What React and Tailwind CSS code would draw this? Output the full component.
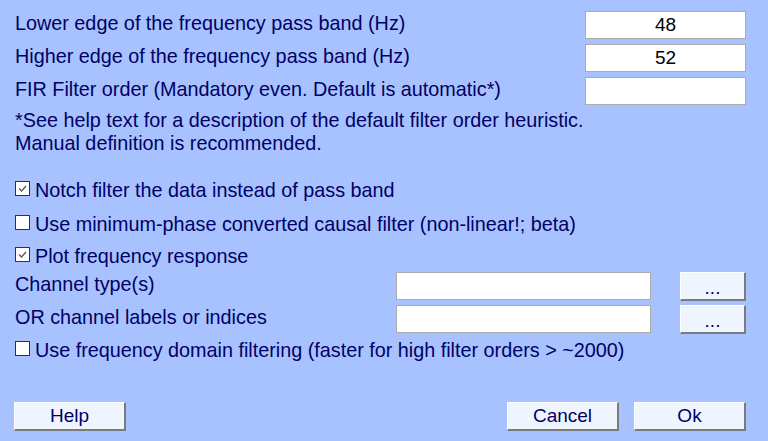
const Field = ({ value, className = "" }) => (
  <div
    className={`flex h-[28px] items-center justify-center border border-[#ababab] bg-white text-[19px] text-black ${className}`}
  >
    {value}
  </div>
);

const Btn = ({ children, className = "" }) => (
  <button
    className={`flex h-[29px] items-center justify-center border-t border-l border-r-2 border-b-2 border-t-white border-l-white border-r-[#7b7b7b] border-b-[#7b7b7b] bg-[#eef5ff] text-[19px] text-[#000066] ${className}`}
  >
    {children}
  </button>
);

const Check = ({ checked, label, className = "" }) => (
  <div className={`flex h-[28px] items-center ${className}`}>
    <span className="mr-[5px] mb-[5px] flex h-[15px] w-[15px] items-center justify-center border border-[#333] bg-white">
      {checked && (
        <svg width="11" height="11" viewBox="0 0 11 11">
          <path d="M2 5.5 L4.5 8 L9 3" fill="none" stroke="#555" strokeWidth="1.3" />
        </svg>
      )}
    </span>
    <span>{label}</span>
  </div>
);

const App = () => {
  return (
    <div className="h-[441px] w-[768px] overflow-hidden bg-[#a8c2ff] pl-[15px] pr-[22px] pt-[11px] font-['Liberation_Sans',Arial,sans-serif] text-[19.8px] text-[#000066]">
      <div className="flex h-[28px] items-center justify-between">
        <span className="-mt-[3px]">Lower edge of the frequency pass band (Hz)</span>
        <Field value="48" className="w-[161px]" />
      </div>
      <div className="mt-[5px] flex h-[28px] items-center justify-between">
        <span className="-mt-[3px]">Higher edge of the frequency pass band (Hz)</span>
        <Field value="52" className="w-[161px]" />
      </div>
      <div className="mt-[5px] flex h-[28px] items-center justify-between">
        <span className="-mt-[3px]">FIR Filter order (Mandatory even. Default is automatic*)</span>
        <Field value="" className="w-[161px]" />
      </div>
      <div className="mt-[4px] h-[45px] leading-[22.5px]">
        <p>*See help text for a description of the default filter order heuristic.</p>
        <p>Manual definition is recommended.</p>
      </div>
      <Check checked label="Notch filter the data instead of pass band" className="mt-[23px]" />
      <Check label="Use minimum-phase converted causal filter (non-linear!; beta)" className="mt-[6px]" />
      <Check checked label="Plot frequency response" className="mt-[4px]" />
      <div className="mt-[1px] flex h-[28px] items-center">
        <span className="-mt-[3px] flex-1">Channel type(s)</span>
        <Field value="" className="w-[255px]" />
        <Btn className="ml-[29px] w-[66px] items-end pb-[2px] text-[13px] leading-none">...</Btn>
      </div>
      <div className="mt-[5px] flex h-[28px] items-center">
        <span className="-mt-[3px] flex-1">OR channel labels or indices</span>
        <Field value="" className="w-[255px]" />
        <Btn className="ml-[29px] w-[66px] items-end pb-[2px] text-[13px] leading-none">...</Btn>
      </div>
      <Check label="Use frequency domain filtering (faster for high filter orders > ~2000)" className="mt-[4px]" />
      <div className="mt-[37px] flex items-center">
        <Btn className="-ml-[1px] w-[112px]">Help</Btn>
        <div className="flex-1" />
        <Btn className="w-[112px]">Cancel</Btn>
        <Btn className="ml-[15px] w-[112px]">Ok</Btn>
      </div>
    </div>
  );
};

export default App;
